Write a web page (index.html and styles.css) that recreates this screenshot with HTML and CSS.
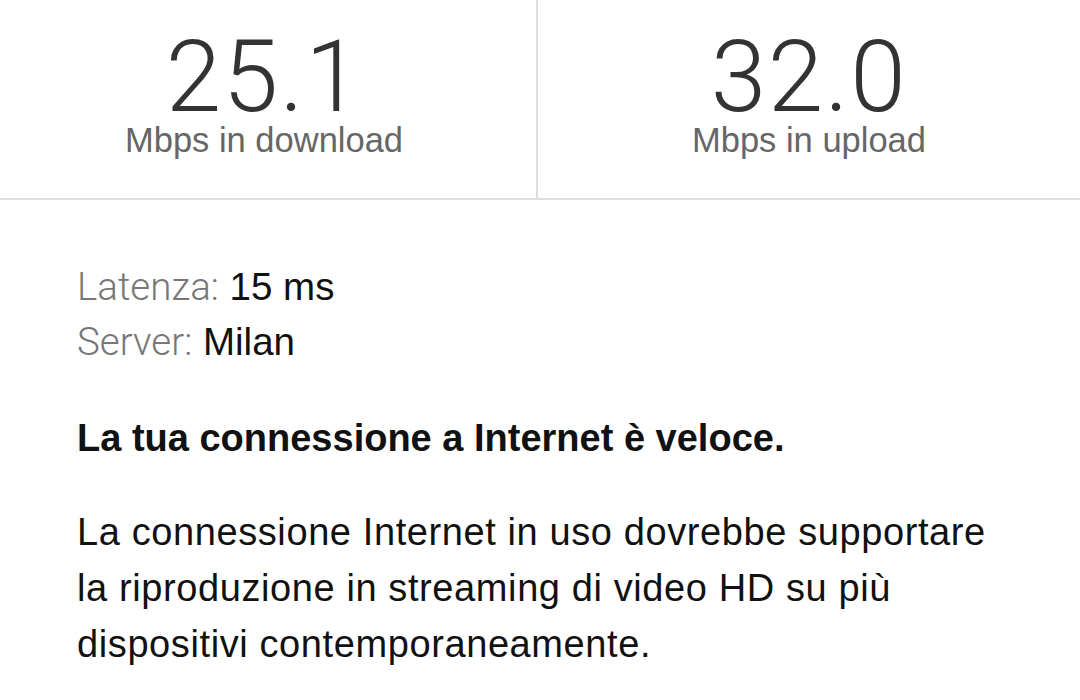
FILE: index.html
```html
<!DOCTYPE html>
<html lang="it">
<head>
    <meta charset="UTF-8">
    <meta name="viewport" content="width=device-width, initial-scale=1.0">
    <title>Test velocità</title>
    <link rel="stylesheet" href="styles.css">
</head>
<body>
    <div class="stats">
        <div class="stat">
            <div class="value">25.1</div>
            <div class="unit">Mbps in download</div>
        </div>
        <div class="stat">
            <div class="value">32.0</div>
            <div class="unit">Mbps in upload</div>
        </div>
    </div>
    <div class="details">
        <p class="info"><span class="label">Latenza:</span> 15 ms</p>
        <p class="info"><span class="label">Server:</span> Milan</p>
        <h2 class="verdict">La tua connessione a Internet è veloce.</h2>
        <p class="desc">La connessione Internet in uso dovrebbe supportare la riproduzione in streaming di video HD su più dispositivi contemporaneamente.</p>
    </div>
</body>
</html>
```

FILE: styles.css
```css
body {
    margin: 0;
    background-color: #fff;
    font-family: "Liberation Sans", Arial, sans-serif;
    color: #1a1a1a;
}
.stats {
    display: grid;
    grid-template-columns: 536px 1fr;
    height: 198px;
    border-bottom: 2px solid #dedede;
}
.stat {
    text-align: center;
    padding-top: 32px;
}
.stat:first-child {
    padding-right: 8px;
}
.stat + .stat {
    border-left: 2px solid #dedede;
}
.value {
    font-family: Roboto, "Liberation Sans", sans-serif;
    font-weight: 300;
    font-size: 100px;
    line-height: 90px;
    letter-spacing: 1.5px;
    color: #333;
}
.unit {
    font-family: "Liberation Sans", Arial, sans-serif;
    font-size: 34.5px;
    line-height: 36px;
    color: #666;
}
.details {
    padding: 59px 77px 0;
}
.info {
    margin: 0;
    font-size: 38.5px;
    line-height: 55px;
    color: #111;
}
.label {
    font-family: Roboto, "Liberation Sans", sans-serif;
    font-weight: 300;
    color: #777;
}
.verdict {
    margin: 46px 0 0;
    font-size: 38px;
    line-height: 46px;
    font-weight: bold;
    color: #111;
}
.desc {
    max-width: 940px;
    margin: 43px 0 0;
    font-size: 38px;
    line-height: 56px;
    letter-spacing: 0.6px;
    color: #111;
}
```
